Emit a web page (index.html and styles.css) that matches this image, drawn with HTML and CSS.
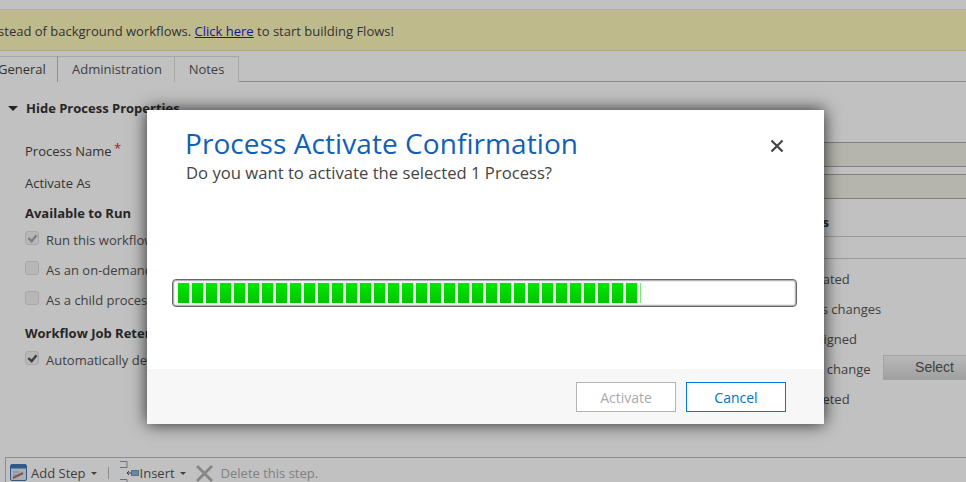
FILE: index.html
```html
<!DOCTYPE html>

<html>
<head>
<title>Process Activate Confirmation</title>
<link rel="stylesheet" href="styles.css">
</head>

<body>
	<div class="topband"></div>
	<div class="notice">
		<span class="notice-text">Use Flows instead of background workflows. <a href="#">Click here</a> to start building Flows!</span>
	</div>

	<div class="tabs">
		<div class="tab tab-active"><span class="tab-cut">General</span></div>
		<div class="tab tab-admin">Administration</div>
		<div class="tab tab-notes">Notes</div>
	</div>

	<div class="section-head">
		<span class="arrow"></span>
		<b>Hide Process Properties</b>
	</div>

	<div class="field-row">
		<label>Process Name <span class="req">*</span></label>
		<div class="field"></div>
	</div>
	<div class="field-row field-row2">
		<label>Activate As</label>
		<div class="field"></div>
	</div>

	<div class="columns">
		<div class="col-left">
			<div class="col-title">Available to Run</div>
			<div class="check-row"><span class="box box-on box-off-tone"></span>Run this workflow in the background</div>
			<div class="check-row"><span class="box"></span>As an on-demand process</div>
			<div class="check-row"><span class="box"></span>As a child process</div>
			<div class="col-title col-title2">Workflow Job Retention</div>
			<div class="check-row"><span class="box box-on"></span>Automatically delete completed jobs</div>
		</div>
		<div class="col-right">
			<div class="right-title">Options for Automatic Processes</div>
			<div class="right-strip"></div>
			<div class="right-row">Record is created</div>
			<div class="right-row">Record status changes</div>
			<div class="right-row">Record is assigned</div>
			<div class="right-row">Record fields change <span class="select-btn">Select</span></div>
			<div class="right-row">Record is deleted</div>
		</div>
	</div>

	<div class="toolbar">
		<svg class="ico-add" width="18" height="18" viewBox="0 0 18 18">
			<rect x="0.5" y="0.5" width="16" height="16" rx="1.5" fill="#dbe9f7" stroke="#3f78b5"/>
			<rect x="1" y="1" width="15" height="3.5" fill="#3f78b5"/>
			<path d="M3 14 L13 9" stroke="#c46a50" stroke-width="2"/>
			<path d="M3 8h6M3 11h4" stroke="#8fb0d0" stroke-width="1"/>
		</svg>
		<span class="tool-text">Add Step</span>
		<span class="caret"></span>
		<span class="tool-sep"></span>
		<svg class="ico-insert" width="21" height="26" viewBox="0 0 21 26">
			<path d="M1 1.5h7v6H1M1 19.5h7v6H1" fill="none" stroke="#8a98a8" stroke-width="1"/>
			<path d="M8 13h4M8 13l2-2M8 13l2 2" fill="none" stroke="#555" stroke-width="1"/>
			<rect x="12.5" y="10.5" width="7" height="5" fill="#8fb2d8" stroke="#6f94bb"/>
		</svg>
		<span class="tool-text">Insert</span>
		<span class="caret"></span>
		<svg class="ico-del" width="17" height="17" viewBox="0 0 17 17">
			<path d="M1 1 L16 16 M16 1 L1 16" stroke="#b0b0b0" stroke-width="2.8"/>
		</svg>
		<span class="tool-text tool-off">Delete this step.</span>
	</div>

	<div class="overlay">
		<div class="dialog">
			<div class="dialog-body">
				<div class="dialog-head">
					<div>
						<div class="dialog-title">Process Activate Confirmation</div>
						<div class="dialog-sub">Do you want to activate the selected 1 Process?</div>
					</div>
					<svg class="dialog-close" width="14" height="14" viewBox="0 0 14 14">
						<path d="M1.5 1.5 L12.5 12.5 M12.5 1.5 L1.5 12.5" stroke="#444" stroke-width="2.2"/>
					</svg>
				</div>
				<div class="progress">
					<span></span><span></span><span></span><span></span><span></span><span></span><span></span><span></span><span></span><span></span><span></span>
					<span></span><span></span><span></span><span></span><span></span><span></span><span></span><span></span><span></span><span></span><span></span>
					<span></span><span></span><span></span><span></span><span></span><span></span><span></span><span></span><span></span><span></span><span></span>
					<i></i>
				</div>
			</div>
			<div class="dialog-foot">
				<button class="btn btn-off">Activate</button>
				<button class="btn btn-main">Cancel</button>
			</div>
		</div>
	</div>
</body>

</html>
```

FILE: styles.css
```css
html, body
{
	margin: 0;
	height: 482px;
	overflow: hidden;
}

body
{
	position: relative;
	background-color: white;
	color: #444;
	font-family: "Open Sans", "Noto Sans", sans-serif;
	font-size: 13px;
}

.topband
{
	height: 9px;
	background-color: #fff;
	border-bottom: 1px solid #e8e8e0;
}

.notice
{
	height: 40px;
	line-height: 42px;
	background-color: #fdf6b9;
	border-bottom: 1px solid #e8e0a0;
	overflow: hidden;
	white-space: nowrap;
	color: #444;
}

.notice-text
{
	margin-left: -77px;
}

.notice a
{
	color: #2222cc;
}

/* tabs */
.tabs
{
	display: flex;
	height: 25px;
	margin-top: 5px;
	border-bottom: 1px solid #bbb;
}

.tab
{
	box-sizing: border-box;
	height: 26px;
	line-height: 24px;
	border: 1px solid #ddd;
	border-bottom: none;
	border-left: none;
	text-align: center;
	background-color: #fff;
	color: #555;
}

.tab-active
{
	width: 58px;
	border-right: 1px solid #bbb;
	height: 26px;
	text-align: left;
	overflow: hidden;
	color: #444;
}

.tab-cut
{
	margin-left: -2px;
}

.tab-admin
{
	width: 117px;
	padding-left: 2px;
}

.tab-notes
{
	width: 64px;
}

/* process properties */
.section-head
{
	display: flex;
	align-items: center;
	height: 20px;
	margin-top: 16px;
	padding-left: 8px;
	color: #333;
}

.arrow
{
	width: 0;
	height: 0;
	margin-right: 8px;
	border-left: 5px solid transparent;
	border-right: 5px solid transparent;
	border-top: 5px solid #333;
}

.field-row
{
	display: flex;
	align-items: center;
	height: 25px;
	margin-top: 24px;
	padding-left: 25px;
}

.field-row2
{
	margin-top: 7px;
}

.field-row label
{
	width: 200px;
	flex: none;
	padding-bottom: 7px;
}

.req
{
	line-height: 0;
	margin-left: -1px;
	color: #b33;
	vertical-align: 3px;
}

.field
{
	flex: 1;
	box-sizing: border-box;
	height: 25px;
	background-color: #f0f0e6;
	border-top: 1px solid #aaa;
	border-bottom: 1px solid #aaa;
}

.columns
{
	display: flex;
	padding-left: 25px;
	margin-top: 4px;
}

.col-left
{
	width: 580px;
	flex: none;
}

.col-title
{
	height: 20px;
	line-height: 20px;
	font-weight: bold;
	color: #333;
}

.col-title2
{
	margin-top: 8px;
}

.check-row
{
	display: flex;
	align-items: center;
	height: 30px;
	color: #555;
}

.col-left .col-title + .check-row
{
	margin-top: 2px;
}

.box
{
	box-sizing: border-box;
	width: 14px;
	height: 14px;
	margin-right: 7px;
	margin-bottom: 4px;
	border: 1px solid #dcdcdc;
	border-radius: 3px;
	background-color: #f2f2f2;
	position: relative;
}

.box-on::after
{
	content: "";
	position: absolute;
	left: 3px;
	top: 0;
	width: 4px;
	height: 8px;
	border-right: 3px solid #555;
	border-bottom: 3px solid #555;
	transform: rotate(40deg) scale(.8);
}

.box-off-tone::after
{
	border-color: #aaa;
}

.col-right
{
	flex: 1;
	min-width: 0;
}

.right-title
{
	height: 20px;
	line-height: 20px;
	margin-top: 9px;
	padding-bottom: 4px;
	padding-right: 137px;
	text-align: right;
	white-space: nowrap;
	font-weight: bold;
	color: #333;
	border-bottom: 1px solid #ccc;
}

.right-strip
{
	height: 21px;
	border-bottom: 1px solid #ccc;
	margin-bottom: 5px;
}

.right-row
{
	display: flex;
	align-items: center;
	height: 30px;
	padding-left: 140px;
	color: #555;
	white-space: nowrap;
}

.select-btn
{
	box-sizing: border-box;
	flex: none;
	width: 104px;
	height: 25px;
	line-height: 23px;
	margin-left: 12px;
	margin-bottom: 4px;
	text-align: center;
	font-family: "Liberation Sans", sans-serif;
	font-size: 14px;
	color: #555;
	border: 1px solid #d8d8d8;
	background: linear-gradient(#f4f4f4, #d4d4d4);
}

/* bottom toolbar */
.toolbar
{
	position: absolute;
	left: 5px;
	right: 0;
	top: 457px;
	height: 25px;
	display: flex;
	align-items: center;
	padding-top: 6px;
	box-sizing: border-box;
	border-top: 1px solid #bbb;
	border-left: 1px solid #bbb;
	color: #555;
}

.ico-add
{
	margin-left: 4px;
	margin-right: 3px;
}

.caret
{
	width: 0;
	height: 0;
	margin-left: 5px;
	border-left: 3px solid transparent;
	border-right: 3px solid transparent;
	border-top: 3px solid #555;
}

.tool-sep
{
	width: 1px;
	height: 12px;
	margin: 0 10px 0 11px;
	background-color: #bbb;
}

.ico-del
{
	margin-left: 10px;
	margin-right: 8px;
}

.tool-off
{
	color: #aaa;
}

/* dialog */
.overlay
{
	position: absolute;
	left: 0;
	top: 0;
	width: 966px;
	height: 482px;
	box-sizing: border-box;
	padding: 110px 142px 0 147px;
	background-color: rgba(0, 0, 0, .245);
}

.dialog
{
	height: 314px;
	display: flex;
	flex-direction: column;
	background-color: white;
	box-shadow: 0 0 16px rgba(0, 0, 0, .8);
}

.dialog-body
{
	height: 259px;
	box-sizing: border-box;
	padding: 14px 27px 0 25px;
}

.dialog-head
{
	display: flex;
	justify-content: space-between;
	padding-left: 14px;
}

.dialog-title
{
	margin-left: -1px;
	font-size: 28px;
	line-height: 38px;
	letter-spacing: .07px;
	color: #1160b7;
}

.dialog-sub
{
	font-size: 16.65px;
	line-height: 22px;
	color: #444;
}

.dialog-close
{
	margin: 15px 13px 0 0;
}

.progress
{
	box-sizing: border-box;
	display: flex;
	align-items: center;
	gap: 3px;
	height: 28px;
	margin-top: 95px;
	padding: 0 5px;
	border: 1px solid #666;
	border-radius: 4px;
	background-color: white;
	box-shadow: inset 0 0 0 1px #b4b4b4, inset 0 0 0 2px #ececec;
}

.progress span
{
	width: 11px;
	height: 20px;
	background: linear-gradient(#00e800, #00c400);
	box-shadow: 0 0 0 1px rgba(0, 200, 0, .1);
}

.progress i
{
	width: 1px;
	height: 20px;
	background-color: #7be87b;
}

.dialog-foot
{
	flex: 1;
	display: flex;
	justify-content: flex-end;
	gap: 10px;
	padding: 13px 38px 0 0;
	background-color: #f7f7f7;
}

.btn
{
	box-sizing: border-box;
	width: 100px;
	height: 30px;
	padding: 0;
	font-family: inherit;
	font-size: 14px;
	background-color: white;
}

.btn-off
{
	border: 1px solid #b3b3b3;
	color: #aaa;
}

.btn-main
{
	border: 1px solid #0078d7;
	color: #0072c6;
}
```
